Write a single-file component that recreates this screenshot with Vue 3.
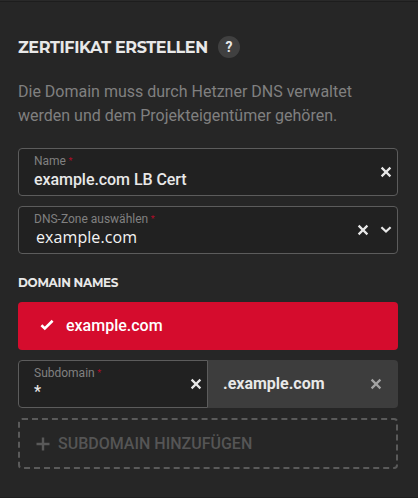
<script setup>
import { ref } from 'vue'

const name = ref('example.com LB Cert')
const zone = ref('example.com')
const subdomain = ref('*')
</script>

<template>
  <main class="panel">
    <header class="head">
      <h1 class="title">ZERTIFIKAT ERSTELLEN</h1>
      <span class="help">?</span>
    </header>
    <p class="intro">Die Domain muss durch Hetzner DNS verwaltet<br />werden und dem Projekteigentümer gehören.</p>

    <section class="field">
      <div class="body">
        <label class="label">Name<span class="req">*</span></label>
        <div class="value name">{{ name }}</div>
      </div>
      <svg class="icon" viewBox="0 0 12 12"><path d="M1.6 1.6 10.4 10.4M10.4 1.6 1.6 10.4" /></svg>
    </section>

    <section class="field zone">
      <div class="body">
        <label class="label">DNS-Zone auswählen<span class="req">*</span></label>
        <div class="value select">{{ zone }}</div>
      </div>
      <svg class="icon" viewBox="0 0 12 12"><path d="M1.6 1.6 10.4 10.4M10.4 1.6 1.6 10.4" /></svg>
      <svg class="icon" viewBox="0 0 12 12"><path d="M1.4 3.2 6 7.5 10.6 3.2" /></svg>
    </section>

    <h2 class="subtitle">DOMAIN NAMES</h2>
    <div class="domain">
      <svg class="check" viewBox="0 0 14 12"><path d="M1.4 6.2 4.8 9.4 12.6 1.8" /></svg>
      <span>{{ zone }}</span>
    </div>

    <div class="row">
      <section class="field sub">
        <div class="body">
          <label class="label">Subdomain<span class="req">*</span></label>
          <div class="value star">{{ subdomain }}</div>
        </div>
        <svg class="icon" viewBox="0 0 12 12"><path d="M1.6 1.6 10.4 10.4M10.4 1.6 1.6 10.4" /></svg>
      </section>
      <div class="suffix">
        <span class="suffix-text">.{{ zone }}</span>
        <svg class="icon muted" viewBox="0 0 12 12"><path d="M1.6 1.6 10.4 10.4M10.4 1.6 1.6 10.4" /></svg>
      </div>
    </div>

    <button class="add" type="button">
      <svg class="plus" viewBox="0 0 14 14"><path d="M7 .5V13.5M.5 7H13.5" /></svg>
      <span>SUBDOMAIN HINZUFÜGEN</span>
    </button>
  </main>
</template>

<style>
body {
  background: #262626;
}
</style>

<style scoped>
.panel {
  box-sizing: border-box;
  height: 498px;
  padding: 34px 20px 0 18px;
  border-top: 1px solid #292929;
  border-bottom: 1px solid #1f1f1f;
  box-shadow: inset 0 1px #1d1d1d;
  background: #262626;
  color: #e8e8e8;
  font-family: Roboto, sans-serif;
  font-size: 16px;
  overflow: hidden;
}
.head {
  display: flex;
  align-items: center;
  gap: 10px;
  height: 24px;
}
.title,
.subtitle {
  margin: 0;
  font-family: Montserrat, Inter, sans-serif;
  font-weight: 700;
  white-space: nowrap;
}
.title {
  width: 190px;
  padding-top: 2px;
  font-size: 16px;
  line-height: 24px;
  letter-spacing: -0.38px;
}
.help {
  width: 22px;
  height: 22px;
  border-radius: 50%;
  background: #404040;
  font-size: 14px;
  font-weight: 700;
  line-height: 22px;
  text-align: center;
}
.intro {
  margin: 21px 0 20px;
  color: #808080;
  line-height: 24px;
  white-space: nowrap;
}
.field {
  box-sizing: border-box;
  display: flex;
  align-items: center;
  gap: 11px;
  height: 48px;
  padding: 0 5px 0 15px;
  border: 1px solid #5c5c5c;
  border-radius: 4px;
  background: #212121;
}
.zone {
  margin-top: 10px;
}
.body {
  flex: 1;
  height: 46px;
}
.label {
  display: block;
  margin-top: 4px;
  color: #808080;
  font-size: 12px;
  line-height: 16px;
}
.req {
  margin-left: 2.5px;
  color: #b00c28;
  font-size: 9px;
  line-height: 1;
  vertical-align: 1.5px;
}
.value {
  font-weight: 500;
  line-height: 20px;
}
.value.name {
  line-height: 22px;
  letter-spacing: -0.06px;
}
.value.select {
  padding-left: 2px;
  color: #f4f4f4;
  font-family: "Open Sans", sans-serif;
  letter-spacing: 0.08px;
}
.value.star {
  line-height: 21px;
}
.icon {
  width: 12px;
  height: 12px;
  fill: none;
  stroke: #e8e8e8;
  stroke-width: 2.2;
}
.icon.muted {
  stroke: #a3a3a3;
}
.subtitle {
  margin: 20px 0 11px;
  font-size: 12px;
  line-height: 17px;
  letter-spacing: -0.3px;
}
.domain {
  box-sizing: border-box;
  display: flex;
  align-items: center;
  gap: 12px;
  height: 48px;
  padding: 0 22px 2px;
  border-radius: 4px;
  background: #d50c2d;
  color: #fff;
  font-weight: 500;
}
.check {
  width: 14px;
  height: 12px;
  fill: none;
  stroke: #fff;
  stroke-width: 2.6;
}
.row {
  display: flex;
  margin-top: 10px;
}
.sub {
  width: 190px;
  border-radius: 4px 0 0 4px;
}
.suffix {
  box-sizing: border-box;
  flex: 1;
  display: flex;
  align-items: center;
  justify-content: space-between;
  padding: 0 16px 0 15px;
  border-radius: 0 4px 4px 0;
  background: #3d3d3d;
  font-weight: 700;
}
.suffix-text {
  padding-bottom: 2px;
}
.add {
  box-sizing: border-box;
  display: flex;
  align-items: center;
  gap: 8px;
  width: 380px;
  height: 51px;
  margin-top: 10px;
  padding: 0 16px;
  border: 2px dashed #5a5a5a;
  border-radius: 4px;
  background: transparent;
  color: #555;
  font: 500 16px/24px Roboto, sans-serif;
}
.plus {
  width: 14px;
  height: 14px;
  fill: none;
  stroke: #595959;
  stroke-width: 2.4;
}
</style>
